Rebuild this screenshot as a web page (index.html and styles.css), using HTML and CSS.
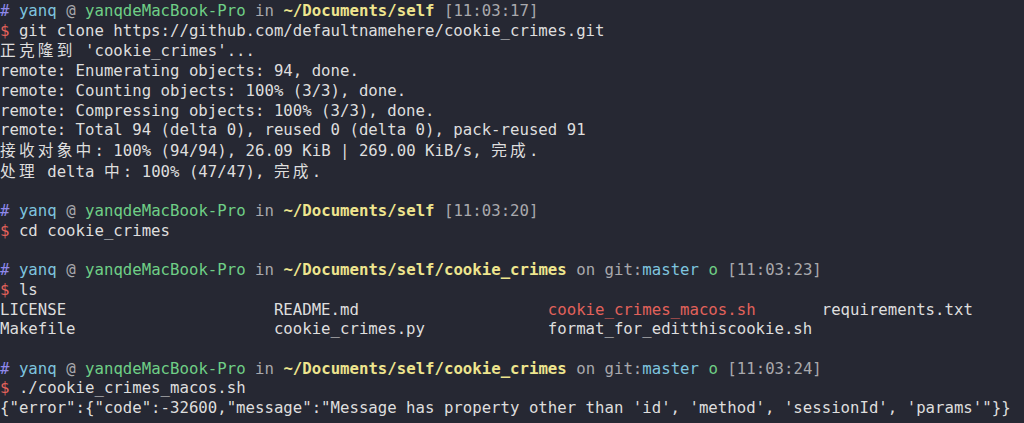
FILE: index.html
```html
<!DOCTYPE html>
<html lang="zh">
<head>
<meta charset="utf-8">
<title>Terminal</title>
<link rel="stylesheet" href="styles.css">
</head>
<body>
<pre class="term"><span class="hash">#</span> <span class="user">yanq</span> <span class="dim">@</span> <span class="host">yanqdeMacBook-Pro</span> <span class="dim">in</span> <span class="path">~/Documents/self</span> <span class="dim">[11:03:17]</span>
<span class="dollar">$</span> git clone https://github.com/defaultnamehere/cookie_crimes.git
<span class="cjk">正克隆到</span> 'cookie_crimes'...
remote: Enumerating objects: 94, done.
remote: Counting objects: 100% (3/3), done.
remote: Compressing objects: 100% (3/3), done.
remote: Total 94 (delta 0), reused 0 (delta 0), pack-reused 91
<span class="cjk">接收对象中</span>: 100% (94/94), 26.09 KiB | 269.00 KiB/s, <span class="cjk">完成</span>.
<span class="cjk">处理</span> delta <span class="cjk">中</span>: 100% (47/47), <span class="cjk">完成</span>.

<span class="hash">#</span> <span class="user">yanq</span> <span class="dim">@</span> <span class="host">yanqdeMacBook-Pro</span> <span class="dim">in</span> <span class="path">~/Documents/self</span> <span class="dim">[11:03:20]</span>
<span class="dollar">$</span> cd cookie_crimes

<span class="hash">#</span> <span class="user">yanq</span> <span class="dim">@</span> <span class="host">yanqdeMacBook-Pro</span> <span class="dim">in</span> <span class="path">~/Documents/self/cookie_crimes</span> <span class="dim">on git:</span><span class="user">master</span> <span class="host">o</span> <span class="dim">[11:03:23]</span>
<span class="dollar">$</span> ls
LICENSE                      README.md                    <span class="exec">cookie_crimes_macos.sh</span>       requirements.txt
Makefile                     cookie_crimes.py             format_for_editthiscookie.sh

<span class="hash">#</span> <span class="user">yanq</span> <span class="dim">@</span> <span class="host">yanqdeMacBook-Pro</span> <span class="dim">in</span> <span class="path">~/Documents/self/cookie_crimes</span> <span class="dim">on git:</span><span class="user">master</span> <span class="host">o</span> <span class="dim">[11:03:24]</span>
<span class="dollar">$</span> ./cookie_crimes_macos.sh
{"error":{"code":-32600,"message":"Message has property other than 'id', 'method', 'sessionId', 'params'"}}</pre>
</body>
</html>
```

FILE: styles.css
```css
html, body {
  margin: 0;
  padding: 0;
  background: #262833;
  height: 100%;
}

.term {
  margin: 0;
  padding: 1px 0 0 0;
  font-family: "DejaVu Sans Mono", "Noto Sans CJK SC", monospace;
  font-size: 15.7px;
  line-height: 19.7px;
  color: #dedede;
  white-space: pre;
  overflow: hidden;
}

.cjk {
  font-family: "Noto Sans CJK SC", "DejaVu Sans Mono", sans-serif;
  letter-spacing: 0.204em;
}

.hash {
  color: #8f88ea;
}

.user {
  color: #7ec4df;
}

.host {
  color: #6fcf86;
}

.dim {
  color: #a9a9ad;
}

.path {
  color: #eee58e;
  font-weight: bold;
}

.dollar {
  color: #e2625b;
}

.exec {
  color: #e2625b;
}
```
